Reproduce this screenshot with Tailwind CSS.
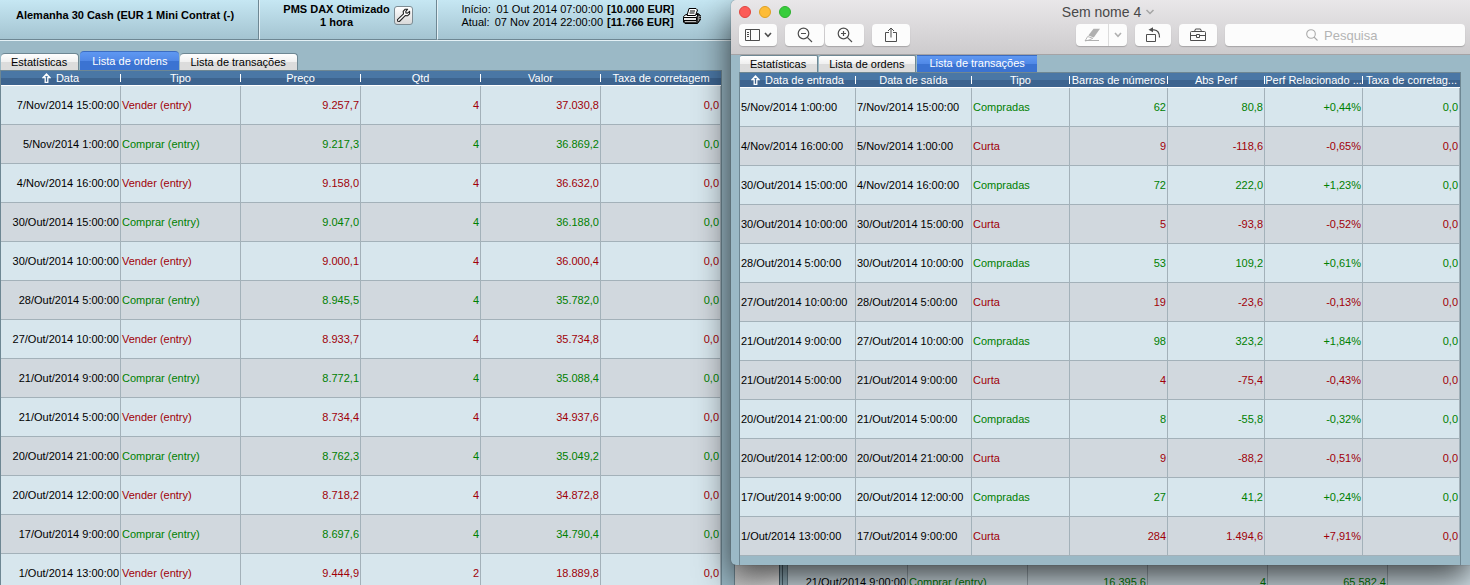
<!DOCTYPE html>
<html lang="pt">
<head>
    <meta charset="UTF-8">
    <meta name="viewport" content="width=device-width, initial-scale=1.0">
    <title>Sem nome 4</title>
    <script src="https://cdn.jsdelivr.net/npm/@tailwindcss/browser@4"></script>
</head>
<body class="relative h-screen overflow-hidden bg-[#e4e4e4] font-['Liberation_Sans',Arial,sans-serif] text-[11px] leading-[13px] text-black">

    <!-- Janela de fundo -->
    <section class="absolute bottom-0 right-0 left-1/2 flex h-[22px] overflow-hidden">
        <div class="w-11 shrink-0 bg-linear-to-r from-[#d0d0d0] to-[#f4f4f4]"></div>
        <div class="w-1 shrink-0 border-x border-[#4c6470] bg-[#9bb9c6]"></div>
        <div class="w-[5px] shrink-0 border-r border-[#6e8793] bg-[#9bb9c6]"></div>
        <div class="grow">
            <table class="w-[720px] table-fixed border-separate border-spacing-0">
                <tbody id="backRows"></tbody>
            </table>
        </div>
    </section>

    <!-- Relatório principal -->
    <section class="flex h-full w-1/2 flex-col overflow-hidden border-r border-[#6e8793] bg-[#9bb9c6]">
        <header class="grid h-[41px] shrink-0 grid-cols-[260fr_179fr_296fr] border-b border-[#e4f1f6] bg-linear-to-b from-[#c6e7f3] to-[#a3c3d0]">
            <div class="border-r border-b border-r-[#e4f1f6] border-b-[#6e8793]">
                <div class="flex h-full items-start border-r border-[#6e8793] pt-[9px] pl-4">
                    <h1 class="font-bold whitespace-nowrap">Alemanha 30 Cash (EUR 1 Mini Contrat (-)</h1>
                </div>
            </div>
            <div class="border-r border-b border-r-[#e4f1f6] border-b-[#6e8793]">
                <div class="flex h-full items-start justify-center gap-1 border-r border-[#6e8793] pt-[3px]">
                    <p class="text-center font-bold whitespace-nowrap">PMS DAX Otimizado<br>1 hora</p>
                    <button aria-label="Configurar" class="mt-[3px] flex size-[19px] items-center justify-center rounded-[3px] border border-[#7d8c93] bg-linear-to-b from-white to-[#d9d9d9]">
                        <svg width="15" height="15" viewBox="0 0 15 15" fill="#fff" stroke="#222" stroke-width="1.1" stroke-linejoin="round">
                            <path d="M11.6 1.2 9 1.3 7.2 3.4 7.5 5.9 1.5 11.6 1.7 13.2 3.4 13.5 9.2 7.6 11.5 7.8 13.6 5.8 13.6 3.4 11.5 5.2 9.9 4.9 9.8 3.4Z"/>
                        </svg>
                    </button>
                </div>
            </div>
            <div class="flex items-start border-b border-[#6e8793] pt-[3px] pl-[23px]">
                <div class="grid grid-cols-[auto_auto_auto] gap-x-1 whitespace-nowrap">
                    <span>Início:</span><span class="text-right">01 Out 2014 07:00:00</span><b>[10.000 EUR]</b>
                    <span>Atual:</span><span class="text-right">07 Nov 2014 22:00:00</span><b>[11.766 EUR]</b>
                </div>
                <button aria-label="Imprimir" class="mt-1 ml-2">
                    <svg width="20" height="18" viewBox="0 0 20 18" stroke="#000" stroke-width="1" stroke-linejoin="round">
                        <path d="M3.5 9.5 16 6.5 18.5 8.5 18.5 12.5 15.5 16.5 3 16.5 1.5 15 1.5 11.5Z" fill="#333"/>
                        <path d="M1.5 9.5 4 7.5H16L14.5 10.5H1.5Z" fill="#fff"/>
                        <path d="M5 8.5 7 1.5H14L15.5 3 13.5 8.5Z" fill="#fff"/>
                        <path d="M8 4H13M7.5 6H12.5"/>
                        <path d="M1.5 10.5H14.5V13.5H1.5Z" fill="#e8e8e8"/>
                        <path d="M3 14.5H14" stroke="#bbb"/>
                        <path d="M16.5 9.5V14M18 9V12" stroke="#ddd" stroke-dasharray="1 1"/>
                    </svg>
                </button>
            </div>
        </header>

        <nav class="flex items-end gap-px pt-[10px] pl-px">
            <button class="h-[17px] rounded-t border-t border-r border-[#6e8793] bg-linear-to-b from-white from-0% via-[#f0f0f0] via-50% to-[#dcdcdc] to-51% pr-[11px] pl-[10px]">Estatísticas</button>
            <button class="h-[19px] rounded-t border-t border-[#3b6cc0] bg-linear-to-b from-[#5f98f2] from-0% via-[#5088e6] via-50% to-[#3b73d2] to-51% px-3 text-white">Lista de ordens</button>
            <button class="h-[17px] rounded-t border-t border-r border-[#6e8793] bg-linear-to-b from-white from-0% via-[#f0f0f0] via-50% to-[#dcdcdc] to-51% pr-[11px] pl-[10px]">Lista de transações</button>
        </nav>

        <div class="mr-3 grow border-x border-t border-[#6e8793]">
            <table class="w-full table-fixed border-separate border-spacing-0">
                <thead><tr id="ordersHead"></tr></thead>
                <tbody id="ordersRows"></tbody>
            </table>
        </div>
    </section>

    <!-- Janela da frente -->
    <section class="absolute top-0 right-0 left-1/2 -ml-1 overflow-hidden rounded-l-[5px] bg-[#9bb9c6] shadow-[0_14px_34px_rgba(0,0,0,0.7),0_0_1px_rgba(0,0,0,0.6)]">
        <header class="h-[55px] border-b border-[#a5a3a5] bg-linear-to-b from-[#e9e7e9] to-[#cdcbcd]">
            <div class="flex h-6 items-center pr-11 pl-2">
                <div class="flex gap-2">
                    <button aria-label="Fechar" class="size-3 rounded-full border border-[#e0443e] bg-[#fc5b57]"></button>
                    <button aria-label="Minimizar" class="size-3 rounded-full border border-[#dfa023] bg-[#fdbc38]"></button>
                    <button aria-label="Ampliar" class="size-3 rounded-full border border-[#2eb030] bg-[#37cd3c]"></button>
                </div>
                <h2 class="flex flex-1 items-center justify-center gap-1 text-[14px] leading-4 text-[#484848]">
                    Sem nome 4
                    <svg width="10" height="6" viewBox="0 0 10 6" fill="none" stroke="#a5a5a5" stroke-width="1.5"><path d="M1.5 1 5 4.5 8.5 1"/></svg>
                </h2>
            </div>
            <div class="flex gap-2 pr-[5px] pl-2 text-[#4d4d4d]">
                <button aria-label="Barra lateral" class="flex h-[22px] w-[38px] items-center justify-center gap-1 rounded bg-[#fcfcfc] shadow-[0_1px_1px_rgba(0,0,0,0.2)]">
                    <svg width="15" height="12" viewBox="0 0 15 12" fill="none" stroke="currentColor"><path d="M.5.5H14.5V11.5H.5ZM5.5.5V11.5M2 3.5H4M2 5.5H4M2 7.5H4"/></svg>
                    <svg width="8" height="6" viewBox="0 0 8 6" fill="none" stroke="currentColor" stroke-width="1.6"><path d="M1 1 4 4.3 7 1"/></svg>
                </button>
                <div class="flex gap-px">
                    <button aria-label="Reduzir" class="flex h-[22px] w-[39px] items-center justify-center rounded bg-[#fcfcfc] shadow-[0_1px_1px_rgba(0,0,0,0.2)]">
                        <svg width="16" height="16" viewBox="0 0 16 16" fill="none" stroke="currentColor" stroke-width="1.2"><circle cx="6.5" cy="6.5" r="5.3"/><path d="M4 6.5H9M10.3 10.3 15 15"/></svg>
                    </button>
                    <button aria-label="Aumentar" class="flex h-[22px] w-[39px] items-center justify-center rounded bg-[#fcfcfc] shadow-[0_1px_1px_rgba(0,0,0,0.2)]">
                        <svg width="16" height="16" viewBox="0 0 16 16" fill="none" stroke="currentColor" stroke-width="1.2"><circle cx="6.5" cy="6.5" r="5.3"/><path d="M4 6.5H9M6.5 4V9M10.3 10.3 15 15"/></svg>
                    </button>
                </div>
                <button aria-label="Compartilhar" class="flex h-[22px] w-[38px] items-center justify-center rounded bg-[#fcfcfc] shadow-[0_1px_1px_rgba(0,0,0,0.2)]">
                    <svg width="12" height="16" viewBox="0 0 12 16" fill="none" stroke="currentColor"><path d="M4 5.5H.5V14.5H11.500V5.5H8M6 10.5V1M3 4 6 1 9 4"/></svg>
                </button>
                <div class="ml-auto flex rounded bg-[#fcfcfc] text-[#b0b0b0] shadow-[0_1px_1px_rgba(0,0,0,0.2)]">
                    <button aria-label="Realçar" class="flex h-[22px] w-8 items-center justify-center">
                        <svg width="17" height="14" viewBox="0 0 17 14"><path d="M9.5.8H16L9.8 9.600 4.300 7.600Z" fill="currentColor"/><path d="M3.700 8.500 8.800 10.300 5 12 1 13Z" fill="#fff" stroke="currentColor" stroke-width=".9"/><path d="M1 12.500H15" stroke="currentColor"/></svg>
                    </button>
                    <button aria-label="Cores" class="flex h-[22px] w-[19px] items-center justify-center border-l border-[#dcdcdc]">
                        <svg width="8" height="6" viewBox="0 0 8 6" fill="none" stroke="currentColor" stroke-width="1.6"><path d="M1 1 4 4.3 7 1"/></svg>
                    </button>
                </div>
                <button aria-label="Girar" class="flex h-[22px] w-9 items-center justify-center rounded bg-[#fcfcfc] shadow-[0_1px_1px_rgba(0,0,0,0.2)]">
                    <svg width="16" height="16" viewBox="0 0 16 16" fill="none" stroke="currentColor"><path d="M1.5 7.5H10.5V14.5H1.5Z"/><path d="M7 2.800H9C12.500 3 14.500 6 14.500 10.500" stroke-width="1.200"/><path d="M3.500 2.800 8 .3V5.300Z" fill="currentColor" stroke="none"/></svg>
                </button>
                <button aria-label="Ferramentas" class="flex h-[22px] w-[38px] items-center justify-center rounded bg-[#fcfcfc] shadow-[0_1px_1px_rgba(0,0,0,0.2)]">
                    <svg width="18" height="14" viewBox="0 0 18 14" fill="none" stroke="currentColor"><path d="M1.500 4.500Q1.500 3.500 2.500 3.500H15.500Q16.500 3.500 16.500 4.500V12.500H1.500ZM5.500 3.500 6.500 1H11.500L12.500 3.500M1.500 7.500H7.500M10.500 7.500H16.500M7.500 6.500H10.500V9.500H7.500Z"/></svg>
                </button>
                <label class="flex h-[22px] w-60 items-center justify-center gap-1.5 rounded bg-[#fcfcfc] pl-5 text-[#aaa] shadow-[0_1px_1px_rgba(0,0,0,0.2)]">
                    <svg class="shrink-0" width="12" height="12" viewBox="0 0 12 12" fill="none" stroke="currentColor" stroke-width="1.1"><circle cx="5" cy="5" r="4.300"/><path d="M8 8 11.500 11.500"/></svg>
                    <input type="search" aria-label="Pesquisa" placeholder="Pesquisa" class="w-20 bg-transparent text-[13px] outline-none placeholder:text-[#b4b4b4]">
                </label>
            </div>
        </header>

        <nav class="flex items-end gap-px pl-[9px]">
            <button class="h-[17px] rounded-t-xs border-t border-r border-[#6e8793] bg-linear-to-b from-white from-0% via-[#f0f0f0] via-50% to-[#dcdcdc] to-51% pr-[11px] pl-[10px]">Estatísticas</button>
            <button class="h-[17px] rounded-t-xs border-t border-r border-[#6e8793] bg-linear-to-b from-white from-0% via-[#f0f0f0] via-50% to-[#dcdcdc] to-51% pr-[11px] pl-[10px]">Lista de ordens</button>
            <button class="h-[17px] border-t border-[#3b6cc0] bg-linear-to-b from-[#5f98f2] from-0% via-[#5088e6] via-50% to-[#3b73d2] to-51% px-3 pb-px text-white">Lista de transações</button>
        </nav>

        <div class="mr-[9px] ml-2 border-x border-t border-[#6e8793] pb-[9px]">
            <table class="w-full table-fixed border-separate border-spacing-0">
                <colgroup>
                    <col class="w-[116px]"><col class="w-[116px]"><col class="w-[98px]"><col class="w-[98px]"><col class="w-[97px]"><col class="w-[98px]"><col class="w-[97px]">
                </colgroup>
                <thead><tr id="tradesHead"></tr></thead>
                <tbody id="tradesRows"></tbody>
            </table>
        </div>
    </section>

    <script>
        const ordersHead = ["Data", "Tipo", "Preço", "Qtd", "Valor", "Taxa de corretagem"];
        const orders = [
            ["7/Nov/2014 15:00:00", "Vender (entry)", "9.257,7", "4", "37.030,8", "0,0"],
            ["5/Nov/2014 1:00:00", "Comprar (entry)", "9.217,3", "4", "36.869,2", "0,0"],
            ["4/Nov/2014 16:00:00", "Vender (entry)", "9.158,0", "4", "36.632,0", "0,0"],
            ["30/Out/2014 15:00:00", "Comprar (entry)", "9.047,0", "4", "36.188,0", "0,0"],
            ["30/Out/2014 10:00:00", "Vender (entry)", "9.000,1", "4", "36.000,4", "0,0"],
            ["28/Out/2014 5:00:00", "Comprar (entry)", "8.945,5", "4", "35.782,0", "0,0"],
            ["27/Out/2014 10:00:00", "Vender (entry)", "8.933,7", "4", "35.734,8", "0,0"],
            ["21/Out/2014 9:00:00", "Comprar (entry)", "8.772,1", "4", "35.088,4", "0,0"],
            ["21/Out/2014 5:00:00", "Vender (entry)", "8.734,4", "4", "34.937,6", "0,0"],
            ["20/Out/2014 21:00:00", "Comprar (entry)", "8.762,3", "4", "35.049,2", "0,0"],
            ["20/Out/2014 12:00:00", "Vender (entry)", "8.718,2", "4", "34.872,8", "0,0"],
            ["17/Out/2014 9:00:00", "Comprar (entry)", "8.697,6", "4", "34.790,4", "0,0"],
            ["1/Out/2014 13:00:00", "Vender (entry)", "9.444,9", "2", "18.889,8", "0,0"]
        ];

        const tradesHead = ["Data de entrada", "Data de saída", "Tipo", "Barras de números", "Abs Perf", "Perf Relacionado ...", "Taxa de corretag..."];
        const trades = [
            ["5/Nov/2014 1:00:00", "7/Nov/2014 15:00:00", "Compradas", "62", "80,8", "+0,44%", "0,0"],
            ["4/Nov/2014 16:00:00", "5/Nov/2014 1:00:00", "Curta", "9", "-118,6", "-0,65%", "0,0"],
            ["30/Out/2014 15:00:00", "4/Nov/2014 16:00:00", "Compradas", "72", "222,0", "+1,23%", "0,0"],
            ["30/Out/2014 10:00:00", "30/Out/2014 15:00:00", "Curta", "5", "-93,8", "-0,52%", "0,0"],
            ["28/Out/2014 5:00:00", "30/Out/2014 10:00:00", "Compradas", "53", "109,2", "+0,61%", "0,0"],
            ["27/Out/2014 10:00:00", "28/Out/2014 5:00:00", "Curta", "19", "-23,6", "-0,13%", "0,0"],
            ["21/Out/2014 9:00:00", "27/Out/2014 10:00:00", "Compradas", "98", "323,2", "+1,84%", "0,0"],
            ["21/Out/2014 5:00:00", "21/Out/2014 9:00:00", "Curta", "4", "-75,4", "-0,43%", "0,0"],
            ["20/Out/2014 21:00:00", "21/Out/2014 5:00:00", "Compradas", "8", "-55,8", "-0,32%", "0,0"],
            ["20/Out/2014 12:00:00", "20/Out/2014 21:00:00", "Curta", "9", "-88,2", "-0,51%", "0,0"],
            ["17/Out/2014 9:00:00", "20/Out/2014 12:00:00", "Compradas", "27", "41,2", "+0,24%", "0,0"],
            ["1/Out/2014 13:00:00", "17/Out/2014 9:00:00", "Curta", "284", "1.494,6", "+7,91%", "0,0"]
        ];

        const arrow = `<svg width="9" height="10" viewBox="0 0 9 10" fill="none" stroke="#fff" stroke-width="1.3"><path d="M4.500 1 7.800 4.500H5.800V9.300H3.200V4.500H1.200Z"/></svg>`;

        function renderHead(id, labels) {
            document.getElementById(id).innerHTML = labels.map((label, i) => `
                <th class="h-[15px] border-b border-white bg-linear-to-b from-[#4a77a5] from-50% to-[#3d648f] to-51% p-0 font-normal text-white">
                    <div class="flex h-[14px] items-center whitespace-nowrap">
                        <span class="flex min-w-0 flex-1 items-center justify-center gap-[5px]">${i === 0 ? arrow : ""}${label}</span>
                        ${i < labels.length - 1 ? `<span class="h-2 w-px bg-white"></span>` : ""}
                    </div>
                </th>
            `).join("");
        }

        // textColumns: colunas alinhadas à esquerda; dateColumns: colunas em preto
        function renderRows(id, rows, dateColumns, textColumns) {
            document.getElementById(id).innerHTML = rows.map(row => {
                let type = row.find(cell => /^(Comp|Vend|Curta)/.test(cell));
                let color = type.startsWith("Comp") ? "text-[#008000]" : "text-[#a00008]";
                return `<tr class="odd:bg-[#d7e6ed] even:bg-[#d1d8de]">${row.map((cell, i) => `
                    <td class="h-[39px] border-r border-b border-[#a3b1b9] px-px py-0 whitespace-nowrap ${textColumns.includes(i) ? "text-left" : "text-right"} ${dateColumns.includes(i) ? "text-black" : color}">${cell}</td>
                `).join("")}</tr>`;
            }).join("");
        }

        renderHead("ordersHead", ordersHead);
        renderRows("ordersRows", orders, [0], [1]);
        renderHead("tradesHead", tradesHead);
        renderRows("tradesRows", trades, [0, 1], [0, 1, 2]);
        renderRows("backRows", [["21/Out/2014 9:00:00", "Comprar (entry)", "16.395,6", "4", "65.582,4", "0,0"]], [0], [1]);
    </script>

</body>
</html>
